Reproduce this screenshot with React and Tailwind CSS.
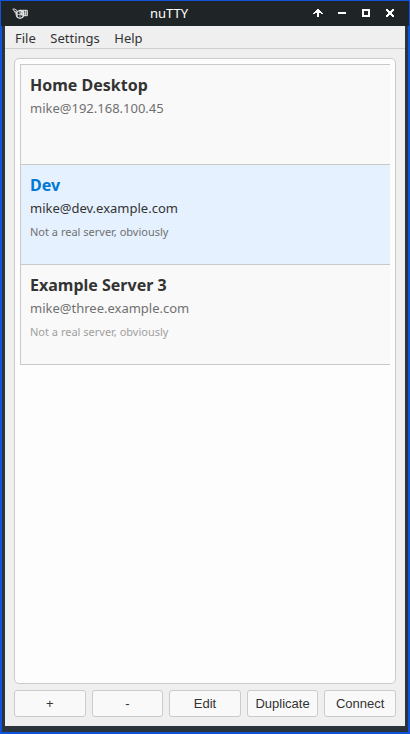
const servers = [
  { name: 'Home Desktop', host: 'mike@192.168.100.45', note: '' },
  { name: 'Dev', host: 'mike@dev.example.com', note: 'Not a real server, obviously', selected: true },
  { name: 'Example Server 3', host: 'mike@three.example.com', note: 'Not a real server, obviously' },
];

const actions = ['+', '-', 'Edit', 'Duplicate', 'Connect'];

function AppIcon() {
  return (
    <svg width="16" height="12" viewBox="0 0 16 12" fill="none" stroke="#f0f0f0" strokeWidth="1">
      <path d="M.5 1.2 2.5 1l2.5 1.5M1.6 1.4l.6 2 2.6.6M2.6 4.6l1.8.7" strokeWidth=".9" />
      <circle cx="8" cy="6.4" r="4" />
      <path d="M4 6.4h8M8 2.4v8M6.2 3c-1.3 2-1.3 5 0 7M9.8 3c1.3 2 1.3 5 0 7" strokeWidth=".7" />
      <path d="M7 2.3h8.3v5.4H11" />
      <path d="M7 4h8M8 5.8h7M9.5 2.3v5.4M11.5 2.3v5.4M13.5 2.3v5.4" strokeWidth=".7" />
    </svg>
  );
}

function TitleBar() {
  return (
    <header className="mx-px flex h-[25px] items-start bg-[#1f2426]">
      <div className="w-[50px] pl-[11px] pt-[7px]"><AppIcon /></div>
      <div className="flex-1 pr-[26px] text-center text-[13px] leading-[25px] text-white">nuTTY</div>
      <svg className="mr-[12px] mt-[6px]" width="84" height="12" viewBox="0 0 84 12" fill="#fff" shapeRendering="crispEdges">
        <path d="M4 2h2v1h1v1h1v1h1v1h1v1H8V6H6v4H4V6H2v1H0V6h1V5h1V4h1V3h1z" />
        <path d="M25 5h8v2h-8z" />
        <path fillRule="evenodd" d="M49 2h8v8h-8zM51 4v4h4V4z" />
        <path d="M73 2h2v1h1v1h2V3h1V2h2v2h-1v1h-1v2h1v1h1v2h-2V9h-1V8h-2v1h-1v1h-2V8h1V7h1V5h-1V4h-1z" />
      </svg>
    </header>
  );
}

function ServerRow({ name, host, note, selected }) {
  return (
    <li className={`h-[100px] border-b border-[#c9c9c9] pl-[9px] pt-[9px] ${selected ? 'bg-[#e5f1fe]' : 'bg-[#f9f9f9]'}`}>
      <h2 className={`h-[22px] text-[16px] font-bold leading-[22px] ${selected ? 'text-[#0078d7]' : 'text-[#333]'}`}>{name}</h2>
      <p className={`mt-[3px] h-[18px] text-[13px] leading-[18px] ${selected ? 'text-[#333]' : 'text-[#707070]'}`}>{host}</p>
      <p className={`mt-[7px] text-[11px] leading-[15px] ${selected ? 'text-[#707070]' : 'text-[#a0a0a0]'}`}>{note}</p>
    </li>
  );
}

export default function App() {
  return (
    <div className="flex h-[734px] w-[410px] cursor-default flex-col bg-[#1054dc] pt-px font-['Noto_Sans',sans-serif]">
      <TitleBar />
      <div className="mx-[2px] mb-[2px] flex flex-1 flex-col bg-[#2a343a] px-[3px] pb-[6px]">
        <div className="flex flex-1 flex-col bg-[#efefef]">
          <nav className="flex h-[23px] gap-[14.5px] border-b border-[#cecece] pl-[10px] text-[13px] leading-[24px] text-[#333]">
            <span>File</span>
            <span>Settings</span>
            <span>Help</span>
          </nav>
          <main className="flex flex-1 flex-col gap-[6px] p-[9px]">
            <section className="flex-1 rounded-[5px] border border-[#cbcbcb] bg-[#fdfdfd] p-[5px]">
              <ul className="border-l border-t border-[#c9c9c9]">
                {servers.map((s) => <ServerRow key={s.name} {...s} />)}
              </ul>
            </section>
            <div className="flex h-[27px] gap-[6px] font-['Liberation_Sans',sans-serif]">
              {actions.map((a) => (
                <button key={a} className="min-w-0 flex-1 rounded-[3px] border border-[#cbcbcb] bg-[#f9f9f9] text-center text-[13px] leading-[25px] text-[#333]">{a}</button>
              ))}
            </div>
          </main>
        </div>
      </div>
    </div>
  );
}
